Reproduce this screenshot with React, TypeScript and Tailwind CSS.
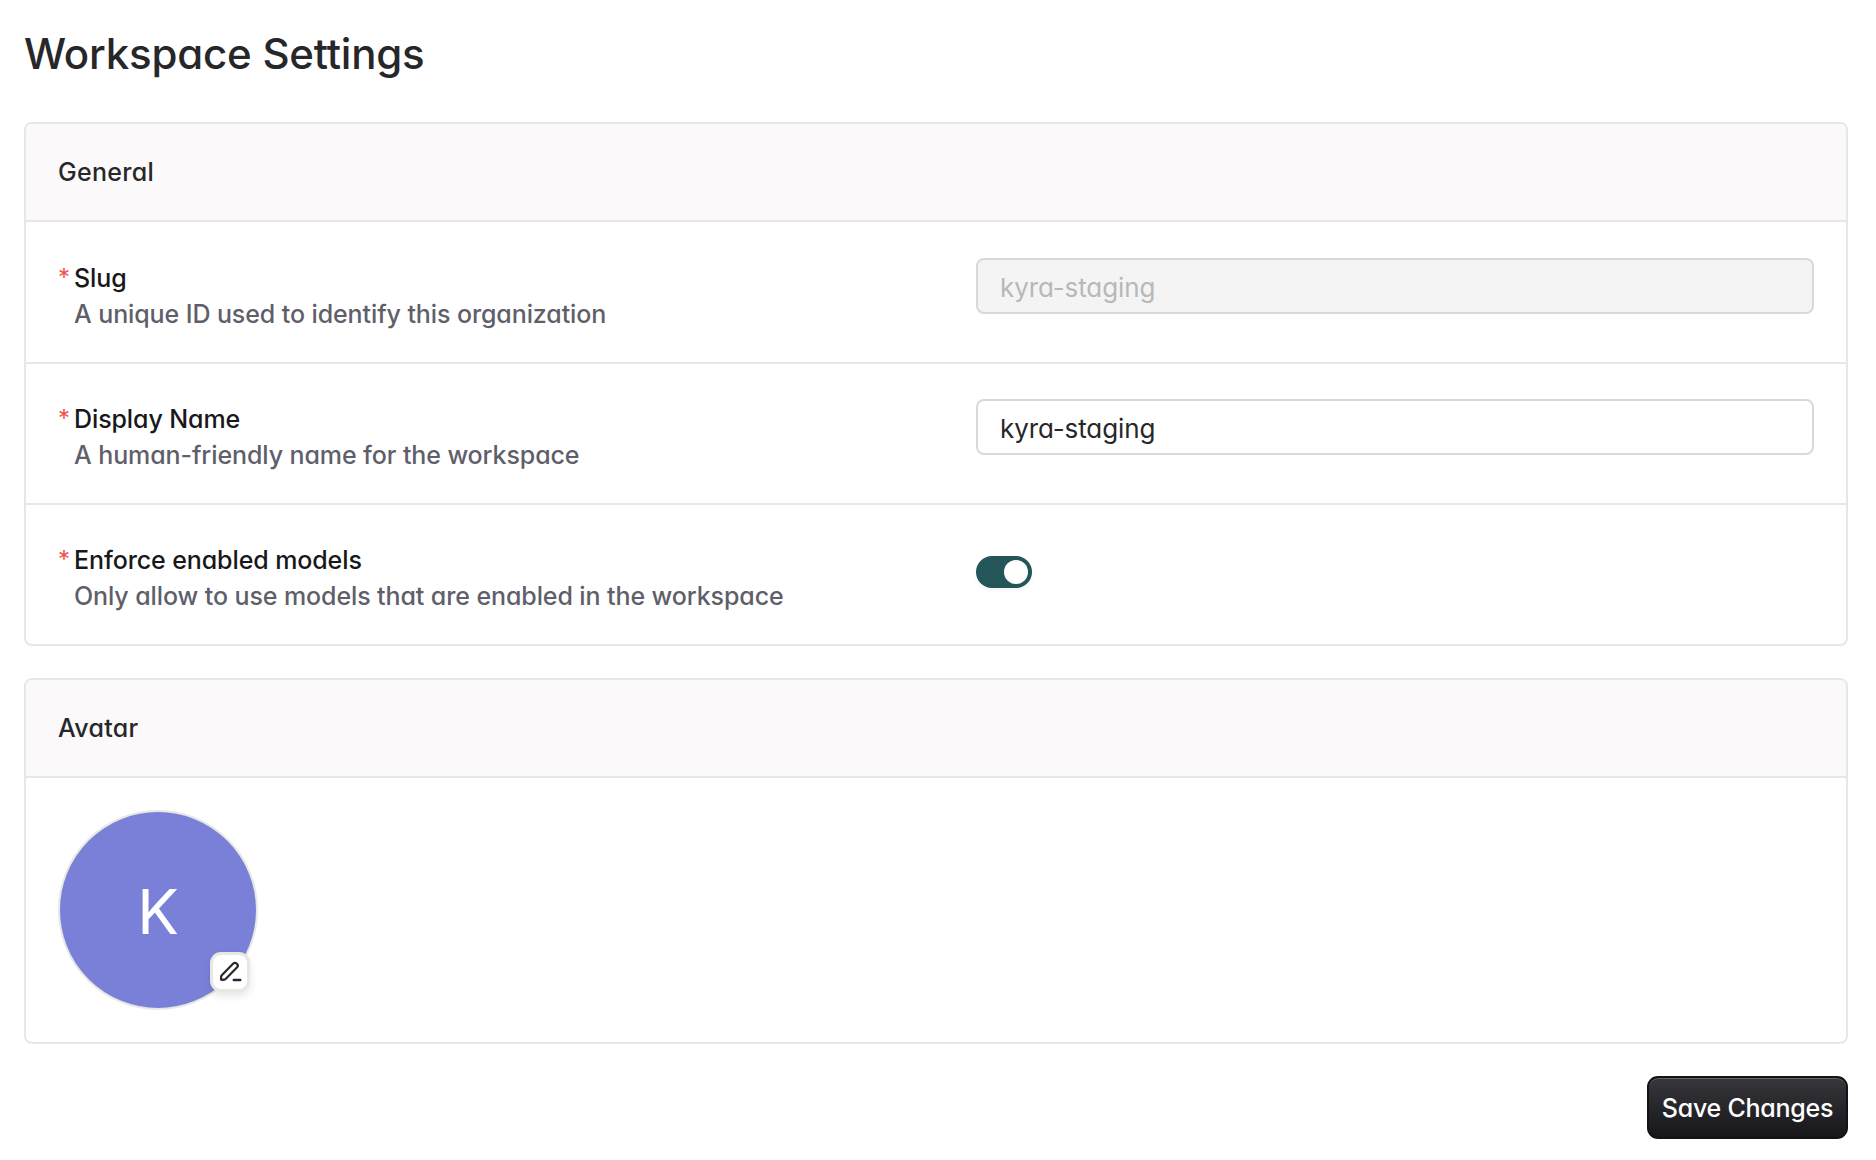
import React from "react";

const font = { fontFamily: "Inter, 'Noto Sans', sans-serif", fontFeatureSettings: "'cv11' 1" };

function Row({ label, desc, children, last, rowClass, textClass }: { label: string; desc: string; children: React.ReactNode; last?: boolean; rowClass: string; textClass: string }) {
  return (
    <div className={`grid grid-cols-[918px_1fr] px-[32px] ${rowClass} ${last ? "" : "border-b-2 border-[#e8e8e3]"}`}>
      <div className={textClass}>
        <div className="flex items-center h-[36px] text-[25px] leading-[36px] font-medium text-[#18181b] tracking-[-0.1px]">
          <span className="w-[16px] text-[#ef5350] text-[24px] leading-[36px] font-normal">*</span>
          <span>{label}</span>
        </div>
        <div className="pl-[16px] text-[25px] leading-[36px] font-medium text-[#5f5f6b] tracking-[-0.1px]">{desc}</div>
      </div>
      <div>{children}</div>
    </div>
  );
}

function CardHeader({ title }: { title: string }) {
  return (
    <div className="h-[98px] flex items-center px-[32px] pt-[2px] bg-[#fbf9fa] border-b-2 border-[#e8e8e3] text-[25px] font-medium text-[#27272a] tracking-[0.3px]">
      {title}
    </div>
  );
}

export default function App() {
  return (
    <div className="bg-white min-h-[1160px] pl-[24px] pr-[28px] pt-[24px] box-border" style={font}>
      <h1 className="h-[60px] flex items-center text-[42px] leading-[60px] font-medium text-[#27272a] tracking-[-0.2px]">Workspace Settings</h1>
      <div className="mt-[38px] border-2 border-[#e8e8e3] rounded-[8px] overflow-hidden">
        <CardHeader title="General" />
        <Row label="Slug" desc="A unique ID used to identify this organization" rowClass="h-[142px] pt-[36px]" textClass="mt-[2px]">
          <div className="h-[56px] flex items-center px-[22px] pt-[2px] bg-[#f4f4f4] border-2 border-[#d9d9d9] rounded-[8px] text-[26px] text-[#b8b8b8] tracking-[-0.1px]">kyra-staging</div>
        </Row>
        <Row label="Display Name" desc="A human-friendly name for the workspace" rowClass="h-[141px] pt-[35px]" textClass="mt-[2px]">
          <div className="h-[56px] flex items-center px-[22px] pt-[2px] bg-white border-2 border-[#d9d9d9] rounded-[8px] text-[26px] text-[#27272a] tracking-[-0.1px]">kyra-staging</div>
        </Row>
        <Row label="Enforce enabled models" desc="Only allow to use models that are enabled in the workspace" rowClass="h-[139px] pt-[36px]" textClass="mt-[1px]" last>
          <div className="w-[56px] h-[32px] mt-[15px] rounded-full bg-[#245558] flex items-center justify-end pr-[4px] shadow-[0_2px_4px_rgba(0,0,0,0.06)]">
            <div className="w-[24px] h-[24px] rounded-full bg-white" />
          </div>
        </Row>
      </div>
      <div className="mt-[32px] border-2 border-[#e8e8e3] rounded-[8px] overflow-hidden">
        <CardHeader title="Avatar" />
        <div className="h-[264px] px-[32px] pt-[32px]">
          <div className="relative w-[200px] h-[200px] pt-[3px] rounded-full bg-[#7a80d8] border-2 border-[#e8e8e3] flex items-center justify-center">
            <span className="text-[62px] leading-none text-white font-normal">K</span>
            <div className="absolute left-[150px] top-[140px] w-[40px] h-[40px] rounded-[11px] bg-white border-[3px] border-[#e8e8e3] shadow-[0_4px_8px_rgba(0,0,0,0.1)] flex items-center justify-center">
              <svg width="26" height="26" viewBox="0 0 24 24" fill="none" stroke="#27272a" strokeWidth="2" strokeLinecap="round" strokeLinejoin="round">
                <path d="M4.4 19.2c-.4 0-.7-.3-.7-.7l.2-2.4c0-.3.1-.6.3-.8L14.8 4.4a2.5 2.5 0 0 1 3.6 3.5L7.7 18.6c-.2.2-.5.4-.8.4Z" />
                <path d="M15.5 19.4h6" strokeWidth="2.2" />
              </svg>
            </div>
          </div>
        </div>
      </div>
      <div className="flex justify-end mt-[32px]">
        <button className="w-[201px] h-[63px] pt-[3px] rounded-[11px] border-2 border-[#131316] bg-gradient-to-b from-[#37363c] to-[#17171a] shadow-[inset_0_1px_0_rgba(255,255,255,0.22)] text-white text-[25px] font-medium tracking-[-0.25px]">Save Changes</button>
      </div>
    </div>
  );
}
